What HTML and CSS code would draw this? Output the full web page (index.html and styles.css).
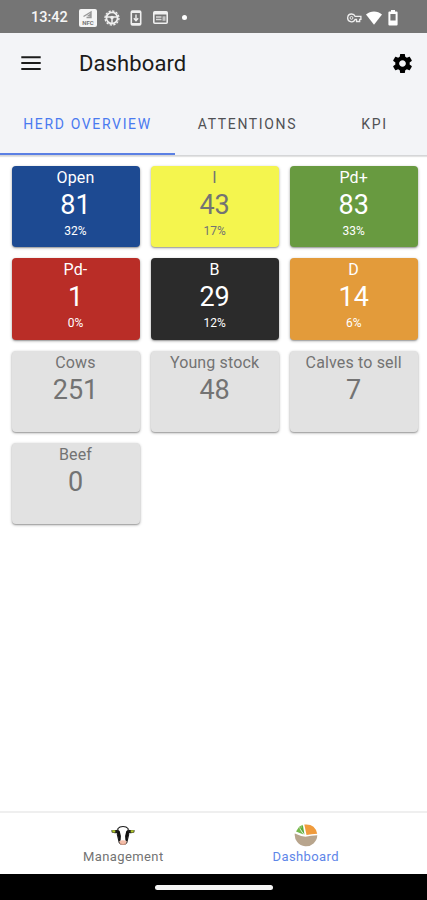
FILE: index.html
```html
<!DOCTYPE html>
<html lang="en">
<head>
    <meta charset="UTF-8">
    <meta name="viewport" content="width=device-width, initial-scale=1.0">
    <title>Dashboard</title>
    <link rel="stylesheet" href="styles.css">
</head>
<body>

<!-- Status bar -->
<div class="status-bar">
    <div class="status-left">
        <span class="clock">13:42</span>
        <svg class="nfc" width="18" height="18" viewBox="0 0 18 18">
            <rect width="18" height="18" rx="2" fill="#f5f5f5"/>
            <path d="M4.500 7.500L12 3v5.500H7.500" fill="none" stroke="#999" stroke-width="1.400"/>
            <path d="M8 7l4-3v4z" fill="#999"/>
            <text x="9" y="16" text-anchor="middle" class="nfc-text">NFC</text>
        </svg>
        <svg class="wheel" width="16" height="16" viewBox="0 0 16 16">
            <circle cx="8" cy="8" r="7" fill="none" stroke="#f0f0f0" stroke-width="1.300" stroke-dasharray="2.300 1.360"/>
            <circle cx="8" cy="8" r="5.600" fill="none" stroke="#f0f0f0" stroke-width="1.800"/>
            <path d="M3 7h10M8 7v6" stroke="#f0f0f0" stroke-width="1.500"/>
            <circle cx="8" cy="7.500" r="1.800" fill="#f0f0f0"/>
        </svg>
        <svg class="phone" width="12" height="16" viewBox="0 0 12 16">
            <rect x="1.300" y="1" width="9.400" height="14" rx="1.200" fill="none" stroke="#f0f0f0" stroke-width="1.600"/>
            <path d="M1 2h10M1 14h10" stroke="#f0f0f0" stroke-width="2"/>
            <path d="M6 4.500v6M3.800 8.300L6 10.700l2.200-2.400" fill="none" stroke="#f0f0f0" stroke-width="1.400"/>
        </svg>
        <svg class="card-icon" width="15" height="13" viewBox="0 0 15 13">
            <rect x=".8" y=".8" width="13.400" height="11.400" rx="1" fill="none" stroke="#f0f0f0" stroke-width="1.600"/>
            <path d="M1 2.200h13" stroke="#f0f0f0" stroke-width="2.600"/>
            <path d="M3 6h5.500M3 8.500h5.500" stroke="#d8d8d8" stroke-width="1.300"/>
            <path d="M9.500 5.300h3v4.500h-3z" fill="#c4c4c4"/>
        </svg>
        <span class="dot"></span>
    </div>
    <div class="status-right">
        <svg width="15" height="10" viewBox="0 0 15 10">
            <path d="M4.500 1a3.900 3.900 0 1 0 3.700 5.300h1.300v2.200h3.200V6.300h1.200V3.400H8.200A3.900 3.900 0 0 0 4.500 1z" fill="none" stroke="#eee" stroke-width="1.300"/>
            <circle cx="4.500" cy="4.900" r="1.400" fill="none" stroke="#eee"/>
        </svg>
        <svg class="wifi" width="16" height="14" viewBox="0 0 16 14">
            <path d="M0 3.400C4.500-.6 11.500-.6 16 3.400L8 13.700z" fill="#fff"/>
        </svg>
        <svg class="battery" width="10" height="16" viewBox="0 0 10 16">
            <path d="M3 0h4v1.600h1.600q1 0 1 1V14.500q0 1-1 1H1.400q-1 0-1-1V2.600q0-1 1-1H3z" fill="#fff"/>
            <path d="M2.400 4h5.200v6.500H2.400z" fill="#777"/>
        </svg>
    </div>
</div>

<!-- Header -->
<header>
    <div class="toolbar">
        <svg class="menu" width="20" height="14" viewBox="0 0 20 14">
            <path d="M.3 1.300h19.400M.3 7.100h19.400M.3 12.900h19.400" stroke="#1c1c1c" stroke-width="2"/>
        </svg>
        <h1>Dashboard</h1>
        <svg class="settings" width="23" height="23" viewBox="0 0 24 24">
            <path fill="#000" d="M19.430 12.980c.04-.32.07-.64.07-.98s-.03-.66-.07-.98l2.110-1.650c.19-.15.24-.42.12-.64l-2-3.460c-.12-.22-.39-.3-.61-.22l-2.490 1c-.52-.4-1.080-.73-1.690-.98l-.38-2.650C14.460 2.180 14.250 2 14 2h-4c-.25 0-.46.18-.49.42l-.38 2.650c-.61.25-1.170.59-1.690.98l-2.490-1c-.23-.09-.49 0-.61.22l-2 3.460c-.13.22-.07.49.12.64l2.110 1.650c-.04.32-.07.65-.07.98s.03.66.07.98l-2.110 1.650c-.19.15-.24.42-.12.64l2 3.460c.12.22.39.3.61.22l2.490-1c.52.4 1.080.73 1.690.98l.38 2.650c.03.24.24.42.49.42h4c.25 0 .46-.18.49-.42l.38-2.650c.61-.25 1.170-.59 1.690-.98l2.490 1c.23.09.49 0 .61-.22l2-3.460c.12-.22.07-.49-.12-.64l-2.110-1.650zM12 15.500c-1.930 0-3.500-1.570-3.500-3.500s1.570-3.500 3.500-3.500 3.500 1.570 3.500 3.500-1.570 3.500-3.500 3.500z"/>
        </svg>
    </div>
    <nav class="tabs">
        <a class="tab tab-herd active">HERD OVERVIEW</a>
        <a class="tab tab-attentions">ATTENTIONS</a>
        <a class="tab tab-kpi">KPI</a>
    </nav>
</header>

<!-- Herd cards -->
<main>
    <div class="card blue">
        <span class="label">Open</span>
        <span class="value">81</span>
        <span class="percent">32%</span>
    </div>
    <div class="card yellow">
        <span class="label">I</span>
        <span class="value">43</span>
        <span class="percent">17%</span>
    </div>
    <div class="card green">
        <span class="label">Pd+</span>
        <span class="value">83</span>
        <span class="percent">33%</span>
    </div>
    <div class="card red">
        <span class="label">Pd-</span>
        <span class="value">1</span>
        <span class="percent">0%</span>
    </div>
    <div class="card black">
        <span class="label">B</span>
        <span class="value">29</span>
        <span class="percent">12%</span>
    </div>
    <div class="card orange">
        <span class="label">D</span>
        <span class="value">14</span>
        <span class="percent">6%</span>
    </div>
    <div class="card">
        <span class="label">Cows</span>
        <span class="value">251</span>
    </div>
    <div class="card">
        <span class="label">Young stock</span>
        <span class="value">48</span>
    </div>
    <div class="card">
        <span class="label">Calves to sell</span>
        <span class="value">7</span>
    </div>
    <div class="card">
        <span class="label">Beef</span>
        <span class="value">0</span>
    </div>
</main>

<!-- Bottom navigation -->
<footer>
    <a class="nav-item management">
        <svg width="24" height="24" viewBox="0 0 24 24">
            <path d="M.3 6.300L5 6l3-.5V9L4 9.300.8 8.500zM23.700 6.300L19 6l-3-.5V9l4 .3 3.200-.8z" fill="#1a1a1a"/>
            <path d="M1 6.300h3.300v2.200H1.600zM23 6.300h-3.300v2.200h2.700z" fill="#b5cc2e"/>
            <path d="M7 4.500Q8.500 2.500 12 2.500t5 2l.7 6-1.900 8q-3.800 4-7.600 0l-1.900-8z" fill="#fff" stroke="#1a1a1a" stroke-width="1.100"/>
            <path d="M7 6Q6 10 8.200 17.500l1.400-1Q10.600 12 8.700 7zM17 6q1 4-1.200 11.500l-1.400-1Q13.400 12 15.300 7z" fill="#111"/>
            <path d="M8.500 17q3.500-1.500 7 0 .4 4-3.500 4t-3.500-4z" fill="#f4bda8"/>
            <path d="M9 19.500q3 2.300 6 0" fill="none" stroke="#c58d79" stroke-width=".8"/>
        </svg>
        <span>Management</span>
    </a>
    <a class="nav-item dashboard">
        <svg width="24" height="24" viewBox="0 0 24 24">
            <path d="M.8 9.500Q6 12 11.500 12.800 17 11.500 23.300 11.300A11.300 11.300 0 1 1 .8 9.500z" fill="#b8a58d"/>
            <path d="M10.300.6Q21-.5 23.200 9.700q-6 .3-10.700 1.200z" fill="#f09b3c"/>
            <path d="M8.800.8L10.500 10.800 6.500 5z" fill="#5cab3c"/>
            <path d="M5.300 2.500L2 7.500l7.500 3-3.500-5z" fill="#75b84c"/>
            <path d="M8.800.8L5.300 2.500l1.200 3z" fill="#7fbd55"/>
        </svg>
        <span>Dashboard</span>
    </a>
</footer>

<div class="system-bar">
    <span class="home-pill"></span>
</div>

</body>
</html>
```

FILE: styles.css
```css
* {
    box-sizing: border-box;
}

body {
    font-family: Roboto, sans-serif;
    margin: 0;
    height: 900px;
    display: flex;
    flex-direction: column;
    background-color: #fff;
    color: #737373;
    overflow: hidden;
}

svg {
    display: block;
    flex: none;
}

/* Status bar */
.status-bar {
    height: 33px;
    padding: 2px 29px 0 31px;
    display: flex;
    justify-content: space-between;
    align-items: center;
    background-color: #757575;
}

.status-left, .status-right {
    display: flex;
    align-items: center;
}

.clock {
    width: 48px;
    color: #f5f5f5;
    font-size: 14.5px;
    font-weight: 500;
}

.nfc-text {
    font-size: 6px;
    font-weight: 700;
    fill: #777;
}

.wheel {
    margin-left: 7px;
}

.phone {
    margin-left: 10px;
}

.card-icon {
    margin-left: 11px;
}

.dot {
    width: 5px;
    height: 5px;
    margin-left: 14px;
    border-radius: 50%;
    background-color: #fff;
}

.wifi {
    margin-left: 4px;
}

.battery {
    margin-left: 6px;
}

/* Header */
header {
    height: 123px;
    background-color: #f3f4f7;
    border-bottom: 1px solid #d5d6d8;
    box-shadow: 0 1px 1px #e3e3e3;
}

.toolbar {
    height: 60px;
    padding: 0 13px 0 21px;
    display: flex;
    align-items: center;
}

h1 {
    margin: 0 auto 0 38px;
    color: #1b1b1b;
    font-size: 22px;
    font-weight: 400;
    letter-spacing: 0.1px;
}

.tabs {
    height: 62px;
    display: flex;
}

.tab {
    display: flex;
    align-items: center;
    justify-content: center;
    padding-top: 1px;
    color: #505154;
    font-size: 14px;
    font-weight: 400;
    letter-spacing: 1.65px;
    border-bottom: 2px solid transparent;
}

.tab-herd {
    width: 175px;
}

.tab-attentions {
    width: 145px;
}

.tab-kpi {
    width: 107px;
    padding-left: 2px;
}

.tab.active {
    color: #4a7af0;
    border-bottom-color: #5b80e4;
}

/* Herd cards */
main {
    flex: 1;
    padding: 10px 10px 0 11.5px;
    display: grid;
    grid-template-columns: repeat(3, 128px);
    grid-auto-rows: 81.4px;
    gap: 10.9px 11.1px;
    align-content: start;
}

.card {
    display: flex;
    flex-direction: column;
    align-items: center;
    padding-top: 2px;
    border-radius: 4px;
    background-color: #e2e2e2;
    box-shadow: 0 1px 3px rgba(0, 0, 0, 0.35), 0 1px 1px rgba(0, 0, 0, 0.15);
}

.label {
    font-size: 16px;
    line-height: 20px;
    letter-spacing: 0.15px;
}

.value {
    font-size: 27px;
    line-height: 35px;
}

.percent {
    font-size: 12px;
    line-height: 16px;
}

.blue {
    background-color: #1d4a92;
    color: #fff;
}

.yellow {
    background-color: #f4f54e;
}

.green {
    background-color: #689a40;
    color: #fff;
}

.red {
    background-color: #b92d27;
    color: #fff;
}

.black {
    background-color: #2b2b2b;
    color: #fff;
}

.orange {
    background-color: #e39b3a;
    color: #fff;
}

/* Bottom navigation */
footer {
    height: 63px;
    padding: 11px 30px 0 32px;
    display: flex;
    border-top: 2px solid #efefef;
    background-color: #fff;
}

.nav-item {
    flex: 1;
    display: flex;
    flex-direction: column;
    align-items: center;
    gap: 1px;
    font-size: 13px;
    line-height: 16px;
    letter-spacing: 0.4px;
}

.dashboard {
    color: #5e86e8;
}

.system-bar {
    height: 26px;
    display: flex;
    align-items: center;
    justify-content: center;
    background-color: #000;
}

.home-pill {
    width: 118px;
    height: 5px;
    border-radius: 3px;
    background-color: #f5f5f5;
}
```
